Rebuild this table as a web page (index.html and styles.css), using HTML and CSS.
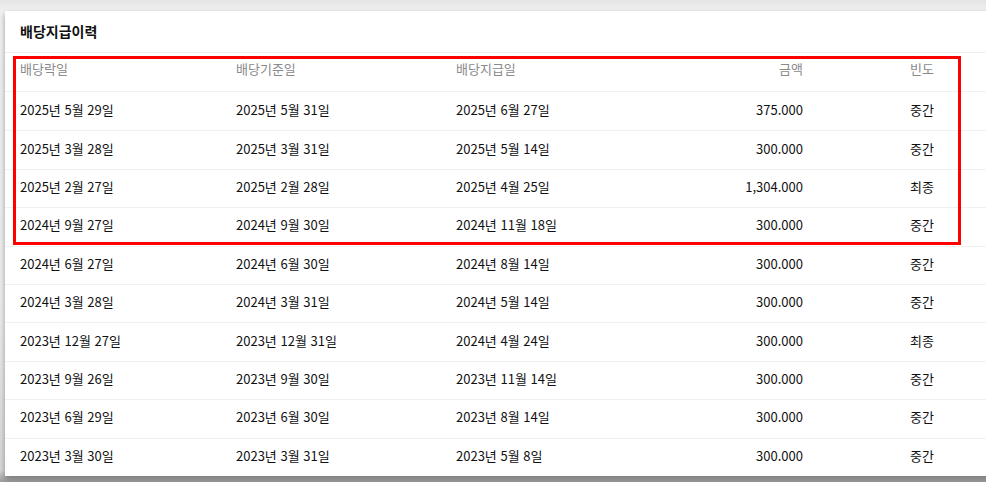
FILE: index.html
```html
<!DOCTYPE html>
<html lang="ko">
<head>
<meta charset="utf-8">
<link rel="stylesheet" href="styles.css">
</head>
<body>
<div class="card">
  <div class="card-title">배당지급이력</div>
  <div class="table">
    <div class="row head">
      <div>배당락일</div><div>배당기준일</div><div>배당지급일</div><div class="num">금액</div><div class="num">빈도</div>
    </div>
    <div class="row"><div>2025년 5월 29일</div><div>2025년 5월 31일</div><div>2025년 6월 27일</div><div class="num">375.000</div><div class="num">중간</div></div>
    <div class="row"><div>2025년 3월 28일</div><div>2025년 3월 31일</div><div>2025년 5월 14일</div><div class="num">300.000</div><div class="num">중간</div></div>
    <div class="row"><div>2025년 2월 27일</div><div>2025년 2월 28일</div><div>2025년 4월 25일</div><div class="num">1,304.000</div><div class="num">최종</div></div>
    <div class="row"><div>2024년 9월 27일</div><div>2024년 9월 30일</div><div>2024년 11월 18일</div><div class="num">300.000</div><div class="num">중간</div></div>
    <div class="row"><div>2024년 6월 27일</div><div>2024년 6월 30일</div><div>2024년 8월 14일</div><div class="num">300.000</div><div class="num">중간</div></div>
    <div class="row"><div>2024년 3월 28일</div><div>2024년 3월 31일</div><div>2024년 5월 14일</div><div class="num">300.000</div><div class="num">중간</div></div>
    <div class="row"><div>2023년 12월 27일</div><div>2023년 12월 31일</div><div>2024년 4월 24일</div><div class="num">300.000</div><div class="num">최종</div></div>
    <div class="row"><div>2023년 9월 26일</div><div>2023년 9월 30일</div><div>2023년 11월 14일</div><div class="num">300.000</div><div class="num">중간</div></div>
    <div class="row"><div>2023년 6월 29일</div><div>2023년 6월 30일</div><div>2023년 8월 14일</div><div class="num">300.000</div><div class="num">중간</div></div>
    <div class="row"><div>2023년 3월 30일</div><div>2023년 3월 31일</div><div>2023년 5월 8일</div><div class="num">300.000</div><div class="num">중간</div></div>
  </div>
  <div class="highlight"></div>
</div>
</body>
</html>
```
FILE: styles.css
```css
html, body {
  margin: 0;
  padding: 0;
  height: 100%;
  overflow: hidden;
}
body {
  background: linear-gradient(to bottom, #e4e4e4 0px, #f1f1f1 11px, #eeeeee 300px, #d8d8d8 470px, #9c9c9c 482px);
  font-family: "Noto Sans CJK KR", "Noto Sans", sans-serif;
  color: #111;
  padding: 11px 0 0 5px;
  box-sizing: border-box;
}
.card {
  position: relative;
  width: 1010px;
  height: 465px;
  background: #fff;
  box-shadow: 0 3px 6px rgba(0,0,0,0.35);
}
.card-title {
  height: 42px;
  box-sizing: border-box;
  padding: 10px 0 0 15px;
  font-size: 14px;
  font-weight: 700;
  line-height: 20px;
  border-bottom: 1px solid #efefef;
  color: #111;
}
.table {
  display: flex;
  flex-direction: column;
}
.row {
  display: grid;
  grid-template-columns: 216px 220px 220px 127px 131px;
  height: 38.4px;
  box-sizing: border-box;
  padding-left: 15px;
  padding-bottom: 3px;
  align-items: center;
  font-size: 13px;
  line-height: 18px;
  border-top: 1px solid #f0f0f0;
}
.row.head {
  border-top: none;
  border-bottom: 1px solid #f0f0f0;
  height: 39px;
  color: #8a8a8a;
  padding-bottom: 7px;
}
.row.head + .row {
  border-top: none;
}
.num {
  text-align: right;
}
.highlight {
  position: absolute;
  left: 8px;
  top: 45px;
  width: 948px;
  height: 189px;
  box-sizing: border-box;
  border: 3px solid #ff0000;
}
```
